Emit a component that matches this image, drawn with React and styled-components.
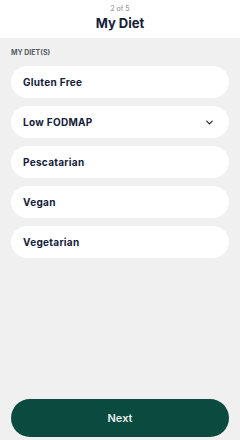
import React from "react";
import styled, { createGlobalStyle } from "styled-components";
import { ChevronDown } from "lucide-react";

const GlobalStyle = createGlobalStyle`
  html, body {
    margin: 0;
    padding: 0;
    background: #f0f0f0;
    font-family: "Inter", "Noto Sans", sans-serif;
  }
  #root {
    height: 440px;
  }
`;

const Screen = styled.div`
  width: 240px;
  height: 440px;
  display: flex;
  flex-direction: column;
  background: #f0f0f0;
`;

const Header = styled.div`
  height: 38px;
  background: #ffffff;
  display: flex;
  flex-direction: column;
  align-items: center;
  padding-top: 3px;
  box-sizing: border-box;
`;

const Step = styled.div`
  font-size: 7px;
  color: #8a8a8a;
  line-height: 9px;
  margin-top: 1px;
`;

const Title = styled.div`
  font-size: 13px;
  font-weight: 700;
  color: #15213a;
  line-height: 16px;
  margin-top: 2px;
`;

const Body = styled.div`
  flex: 1;
  padding: 10px 11px 3px;
  display: flex;
  flex-direction: column;
`;

const Label = styled.div`
  font-size: 7px;
  font-weight: 700;
  color: #555b63;
  line-height: 9px;
  margin-bottom: 9px;
`;

const List = styled.div`
  display: flex;
  flex-direction: column;
  gap: 8px;
`;

const Option = styled.div`
  height: 32px;
  border-radius: 16px;
  background: #ffffff;
  display: flex;
  align-items: center;
  justify-content: space-between;
  padding: 0 14px 0 12px;
  font-size: 10px;
  font-weight: 700;
  letter-spacing: 0.3px;
  color: #15213a;
`;

const Spacer = styled.div`
  flex: 1;
`;

const NextButton = styled.button`
  height: 38px;
  border: none;
  border-radius: 19px;
  background: #0b4a3f;
  color: #e8f0ee;
  font-family: inherit;
  font-size: 11px;
  font-weight: 600;
`;

const diets = [
  { name: "Gluten Free" },
  { name: "Low FODMAP", expand: true },
  { name: "Pescatarian" },
  { name: "Vegan" },
  { name: "Vegetarian" },
];

export default function App() {
  return (
    <>
      <GlobalStyle />
      <Screen>
        <Header>
          <Step>2 of 5</Step>
          <Title>My Diet</Title>
        </Header>
        <Body>
          <Label>MY DIET(S)</Label>
          <List>
            {diets.map((d) => (
              <Option key={d.name}>
                {d.name}
                {d.expand && <ChevronDown size={11} strokeWidth={2.5} color="#15213a" />}
              </Option>
            ))}
          </List>
          <Spacer />
          <NextButton>Next</NextButton>
        </Body>
      </Screen>
    </>
  );
}
